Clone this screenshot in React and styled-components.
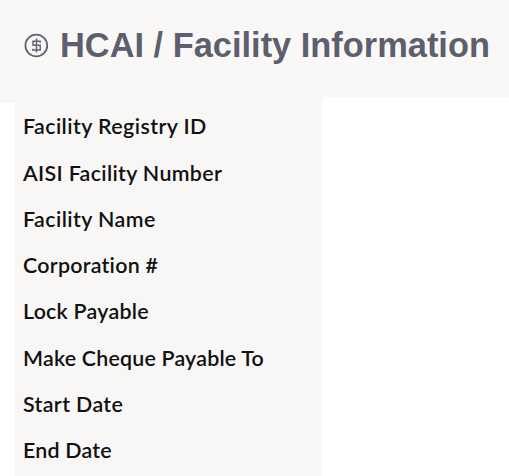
import styled, { createGlobalStyle } from "styled-components";

const GlobalStyle = createGlobalStyle`
  body {
    margin: 0;
    background: #ffffff;
    overflow: hidden;
  }
`;

const Page = styled.div`
  width: 509px;
  height: 476px;
  overflow: hidden;
  display: flex;
  flex-direction: column;
`;

const Header = styled.header`
  height: 97px;
  flex-shrink: 0;
  box-sizing: border-box;
  display: flex;
  align-items: flex-start;
  padding: 25px 0 0 24px;
  background: #f9f8f6;
`;

const Icon = styled.svg`
  width: 25px;
  height: 25px;
  margin: 8px 11px 0 0;
  flex-shrink: 0;
  fill: none;
  stroke: #646372;
`;

const Title = styled.h1`
  margin: 0;
  font-family: "Liberation Sans", Arial, sans-serif;
  font-size: 34.4px;
  font-weight: 700;
  line-height: 40px;
  white-space: nowrap;
  color: #5d5f6e;
`;

const Content = styled.main`
  flex: 1;
  display: flex;
`;

const Gutter = styled.div`
  width: 15px;
  height: 6px;
  background: #f9f8f6;
`;

const Labels = styled.ul`
  width: 307px;
  box-sizing: border-box;
  margin: 0;
  padding: 6.4px 0 0 8px;
  list-style: none;
  background: #f8f7f5;
`;

const Label = styled.li`
  height: 46.25px;
  font-family: Lato, sans-serif;
  font-size: 21.4px;
  font-weight: 600;
  line-height: 46px;
  letter-spacing: ${(props) => props.$tracking}px;
  font-variant-ligatures: none;
  white-space: nowrap;
  color: #111111;
`;

const labels = [
  { text: "Facility Registry ID", tracking: 0.42 },
  { text: "AISI Facility Number", tracking: 0.33 },
  { text: "Facility Name", tracking: 0.43 },
  { text: "Corporation #", tracking: 0.26 },
  { text: "Lock Payable", tracking: 0.25 },
  { text: "Make Cheque Payable To", tracking: 0.2 },
  { text: "Start Date", tracking: 0.37 },
  { text: "End Date", tracking: 0.22 },
];

const DollarIcon = () => {
  return (
    <Icon viewBox="0 0 25 25">
      <circle cx="12.3" cy="12.5" r="10.9" strokeWidth="1.8" />
      <path
        d="M12.5 5.5v14M16.2 9.8V8.2H9v4h7.2v4.9H8.8v-1.4"
        strokeWidth="1.5"
      />
    </Icon>
  );
};

const App = () => {
  return (
    <>
      <GlobalStyle />
      <Page>
        <Header>
          <DollarIcon />
          <Title>HCAI / Facility Information</Title>
        </Header>
        <Content>
          <Gutter />
          <Labels>
            {labels.map(({ text, tracking }) => (
              <Label key={text} $tracking={tracking}>
                {text}
              </Label>
            ))}
          </Labels>
        </Content>
      </Page>
    </>
  );
};

export default App;
